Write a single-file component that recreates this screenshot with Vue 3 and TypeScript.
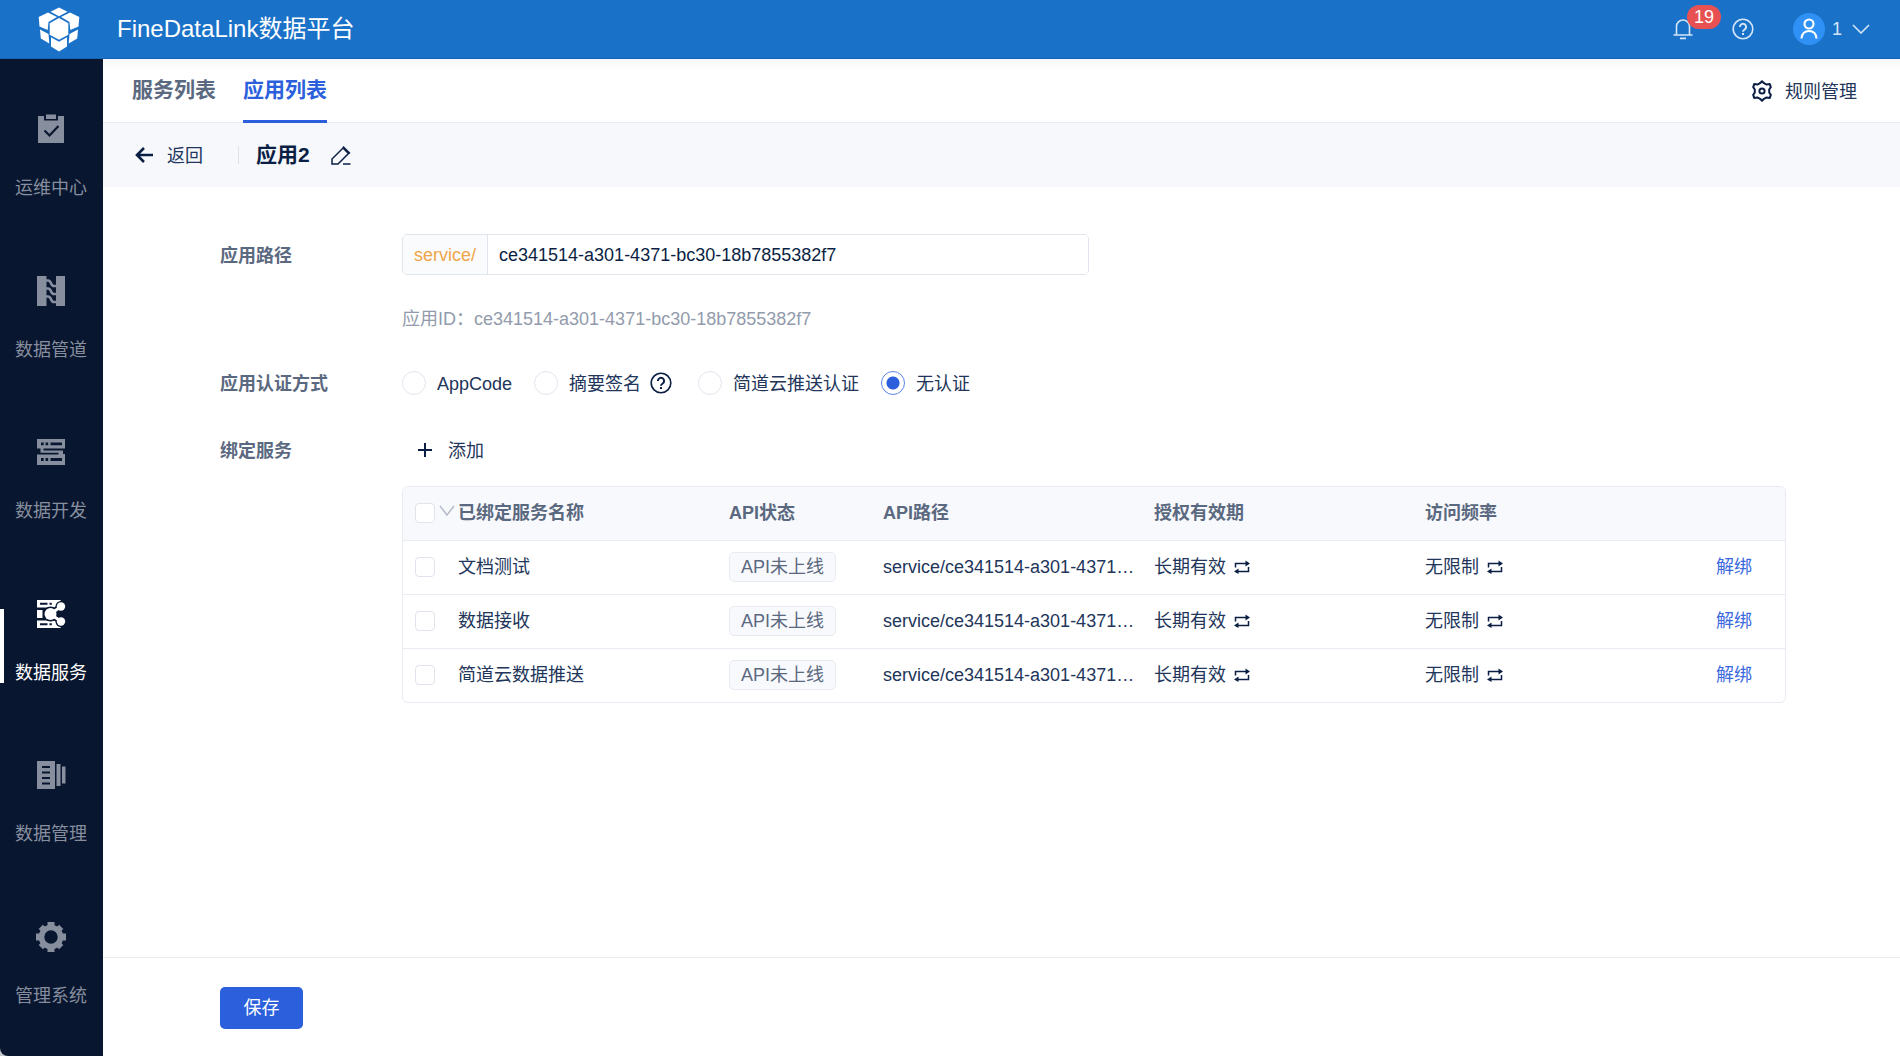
<script setup lang="ts">
import { ref, computed } from 'vue'

interface NavItem {
  key: string
  label: string
}

interface BoundService {
  id: number
  name: string
  status: string
  path: string
  validity: string
  rate: string
}

const navItems: NavItem[] = [
  { key: 'ops', label: '运维中心' },
  { key: 'pipeline', label: '数据管道' },
  { key: 'develop', label: '数据开发' },
  { key: 'service', label: '数据服务' },
  { key: 'manage', label: '数据管理' },
  { key: 'system', label: '管理系统' },
]
const activeNav = ref('service')

const appId = 'ce341514-a301-4371-bc30-18b7855382f7'
const appPath = ref(appId)

const authModes = [
  { value: 'appcode', label: 'AppCode', help: false },
  { value: 'digest', label: '摘要签名', help: true },
  { value: 'jiandaoyun', label: '简道云推送认证', help: false },
  { value: 'none', label: '无认证', help: false },
]
const authMode = ref('none')

const services = ref<BoundService[]>(
  ['文档测试', '数据接收', '简道云数据推送'].map((name, i) => ({
    id: i + 1,
    name,
    status: 'API未上线',
    path: `service/${appId}/${i + 1}`,
    validity: '长期有效',
    rate: '无限制',
  })),
)

const PATH_LIMIT = 26
function shorten(path: string): string {
  return path.length > PATH_LIMIT ? `${path.slice(0, PATH_LIMIT)}…` : path
}

const selected = ref<number[]>([])
const allSelected = computed({
  get: () => services.value.length > 0 && selected.value.length === services.value.length,
  set: (on: boolean) => {
    selected.value = on ? services.value.map((s) => s.id) : []
  },
})

function unbind(id: number) {
  services.value = services.value.filter((s) => s.id !== id)
  selected.value = selected.value.filter((s) => s !== id)
}
</script>

<template>
  <div class="app">
    <header class="topbar">
      <svg class="logo" viewBox="0 0 42 45" width="42" height="45" fill="#fff" aria-hidden="true">
        <path d="M21 .5l8.500 4.300L21 9.200l-8.500-4.400z" />
        <path d="M10 5.500L19 10l-8.500 5-.8 8L1.500 19.500.7 10z" />
        <path d="M32 5.500L23 10l8.500 5 .8 8 8.200-3.500.8-9.500z" />
        <path d="M21 11l9.300 5.300v11.500L21 32.700l-9.300-4.900V16.300z" />
        <path d="M2 22.500l8.500 4.500.8 9.500-8.500-5z" />
        <path d="M40 22.500L31.500 27l-.8 9.500 8.500-5z" />
        <path d="M13 30.200l8 4.500 8-4.500v9.300l-8 5-8-5z" />
      </svg>
      <h1 class="brand">FineDataLink数据平台</h1>
      <div class="top-tools">
        <button class="plain bell" aria-label="消息">
          <svg viewBox="0 0 20 22" width="20" height="22" fill="none" stroke="currentColor" stroke-width="1.600" aria-hidden="true">
            <path d="M3.500 17V8.500a6.500 6.500 0 0 1 13 0V17M.5 17h19M7 20.400h6" />
          </svg>
          <span class="badge">19</span>
        </button>
        <button class="plain help" aria-label="帮助">
          <svg viewBox="0 0 22 22" width="22" height="22" fill="none" stroke="currentColor" stroke-width="1.600" aria-hidden="true">
            <circle cx="11" cy="11" r="9.800" />
            <path d="M7.900 8.900a3.100 3.100 0 1 1 4.800 2.600c-1.100.7-1.700 1.100-1.700 2.200M11 15v2" stroke-width="2" />
          </svg>
        </button>
        <button class="plain user">
          <svg viewBox="0 0 32 32" width="32" height="32" fill="none" stroke="#fff" stroke-width="2.200" aria-hidden="true">
            <circle cx="16" cy="16" r="16" fill="#2f91f5" stroke="none" />
            <circle cx="16" cy="11" r="4.500" />
            <path d="M8.500 25.500c.4-4.700 3.200-7.500 7.500-7.500s7.100 2.800 7.500 7.500" />
          </svg>
          <span>1</span>
          <svg class="caret" viewBox="0 0 18 10" width="18" height="10" fill="none" stroke="currentColor" stroke-width="1.600" aria-hidden="true">
            <path d="M1 1l8 8 8-8" />
          </svg>
        </button>
      </div>
    </header>

    <div class="body">
      <nav class="sidebar">
        <a
          v-for="item in navItems"
          :key="item.key"
          href="#"
          class="nav-item"
          :class="{ active: item.key === activeNav }"
          @click.prevent="activeNav = item.key"
        >
          <svg v-if="item.key === 'ops'" viewBox="0 0 30 30" width="30" height="30" aria-hidden="true">
            <path fill="currentColor" d="M2 2h6v4.500h14V2h6v27H2zM10 .5h10V5H10z" />
            <path d="M8.500 16.500l5 5L22.500 12" fill="none" stroke="#081630" stroke-width="2.200" />
          </svg>
          <svg v-else-if="item.key === 'pipeline'" viewBox="0 0 30 30" width="30" height="30" aria-hidden="true">
            <path fill="currentColor" d="M1 0h9.500v30H1zM20 0h9v30h-9z" />
            <path d="M10 4.500h2c4 0 2 5.500 6 5.500h2M10 12.500h2c4 0 2 5.500 6 5.500h2M10 20.500h2c4 0 2 5.500 6 5.500h2" fill="none" stroke="currentColor" stroke-width="2.600" />
          </svg>
          <svg v-else-if="item.key === 'develop'" viewBox="0 0 30 30" width="30" height="30" aria-hidden="true">
            <path fill="currentColor" fill-rule="evenodd" d="M1 2h28v9.500H7.500v2H27V17h2v11H1V17.500h21.500v-1.800H4.500v-4.200H1zM5 5.500v2.700h2.700V5.500zm4.500 0v2.700h2.700V5.500zm5 0v2.700H26V5.500zM5 21v3h2.700v-3zm4.500 0v3h2.700v-3zm5 0v3H26v-3z" />
          </svg>
          <svg v-else-if="item.key === 'service'" viewBox="0 0 30 30" width="30" height="30" aria-hidden="true">
            <path fill="currentColor" fill-rule="evenodd" d="M1 1h24l-6 7.500H1zM4 3.700v2.100h7.500V3.700zm9.500 0v2.100h2.300V3.700zM1 11h5.500v8H1zM1 21.500h18l6 7.500H1zM4 24.200v2.100h7.500v-2.100zm9.500 0v2.100h2.300v-2.100z" />
            <path d="M14.500 15L25 7.500M14.500 15L25 22.500" stroke="#081630" stroke-width="6" />
            <circle cx="14.500" cy="15" r="7.500" fill="#081630" />
            <circle cx="25" cy="7.500" r="5.500" fill="#081630" />
            <circle cx="25" cy="22.500" r="5.500" fill="#081630" />
            <path d="M14.500 15L25 7.500M14.500 15L25 22.500" stroke="currentColor" stroke-width="3" />
            <g fill="currentColor">
              <circle cx="14.500" cy="15" r="6" />
              <circle cx="25" cy="7.500" r="4.200" />
              <circle cx="25" cy="22.500" r="4.200" />
            </g>
          </svg>
          <svg v-else-if="item.key === 'manage'" viewBox="0 0 30 30" width="30" height="30" aria-hidden="true">
            <path fill="currentColor" fill-rule="evenodd" d="M1 1h18v28H1zm5 5v2h8V6zm0 5.500v2h8v-2zm0 5.500v2h8v-2zm0 5.500v2h8v-2zM20.500 4h4v22h-4zM26 6.500h3.500v17H26z" />
          </svg>
          <svg v-else viewBox="0 0 30 30" width="30" height="30" aria-hidden="true">
            <g fill="none" stroke="currentColor">
              <circle cx="15" cy="15" r="9.500" stroke-width="5.600" />
              <path d="M15 0v5M15 25v5M0 15h5M25 15h5" stroke-width="7" />
              <path d="M4.800 4.800L8 8M22 22l3.200 3.200M4.800 25.200L8 22M22 8l3.200-3.200" stroke-width="6" />
            </g>
          </svg>
          <span>{{ item.label }}</span>
        </a>
      </nav>

      <main class="main">
        <div class="tabs">
          <a href="#" class="tab">服务列表</a>
          <a href="#" class="tab current">应用列表</a>
          <button class="plain rules">
            <svg viewBox="0 0 20 22" width="20" height="22" fill="none" stroke="currentColor" stroke-width="2" stroke-linejoin="round" aria-hidden="true">
              <path d="M8 3.200L10 1.200l2 2 2.600 1.400 3.200-.5 1 3-1.600 2.400v3l1.600 2.400-1 3-3.200-.5L12 18.800l-2 2-2-2-2.600-1.400-3.200.5-1-3 1.600-2.400v-3L1.200 7.100l1-3 3.200.5z" />
              <circle cx="10" cy="11" r="2.600" />
            </svg>
            <span class="caption">规则管理</span>
          </button>
        </div>

        <div class="crumb">
          <button class="plain back">
            <svg viewBox="0 0 20 18" width="20" height="18" fill="none" stroke="currentColor" stroke-width="2.600" aria-hidden="true">
              <path d="M19 9H3M10 2L3 9l7 7" />
            </svg>
            <span class="caption">返回</span>
          </button>
          <h2 class="app-name">应用2</h2>
          <button class="plain edit" aria-label="编辑名称">
            <svg viewBox="0 0 20 20" width="20" height="20" fill="none" stroke="currentColor" stroke-width="1.500" aria-hidden="true">
              <path d="M1 19v-5L12 3l5.500 5.500L7 19zM12 1.500l7 7M12 19h7.500" />
            </svg>
          </button>
        </div>

        <form id="app-form" class="form" @submit.prevent>
          <label class="form-label tall" for="app-path">应用路径</label>
          <div class="path-group">
            <span class="prefix">service/</span>
            <input id="app-path" v-model="appPath" type="text" />
          </div>

          <p class="app-id">应用ID：{{ appId }}</p>

          <span id="auth-label" class="form-label">应用认证方式</span>
          <div class="radios" role="radiogroup" aria-labelledby="auth-label">
            <div v-for="m in authModes" :key="m.value" class="radio-item">
              <label class="radio">
                <input v-model="authMode" type="radio" name="auth" :value="m.value" />
                <span class="caption">{{ m.label }}</span>
              </label>
              <svg v-if="m.help" class="hint" viewBox="0 0 22 22" width="22" height="22" fill="none" stroke="#0b1f44" stroke-width="1.600" aria-hidden="true">
                <circle cx="11" cy="11" r="9.800" />
                <path d="M7.900 8.900a3.100 3.100 0 1 1 4.800 2.600c-1.100.7-1.700 1.100-1.700 2.200M11 15v2" stroke-width="2" />
              </svg>
            </div>
          </div>

          <span class="form-label">绑定服务</span>
          <div class="binding">
            <button class="plain add" type="button">
              <svg viewBox="0 0 16 16" width="16" height="16" fill="none" stroke="currentColor" stroke-width="2" aria-hidden="true">
                <path d="M8 1v14M1 8h14" />
              </svg>
              <span class="caption">添加</span>
            </button>
            <div class="table-box">
              <table>
                <colgroup>
                  <col class="c-check" />
                  <col />
                  <col class="c-status" />
                  <col />
                  <col />
                  <col />
                  <col class="c-action" />
                </colgroup>
                <thead>
                  <tr>
                    <th class="check">
                      <div class="check-head">
                        <input v-model="allSelected" type="checkbox" aria-label="全选" />
                        <svg viewBox="0 0 16 14" width="16" height="14" fill="none" stroke="#b4bccb" stroke-width="1.500" aria-hidden="true">
                          <path d="M1 3l7 9 7-9" />
                        </svg>
                      </div>
                    </th>
                    <th>已绑定服务名称</th>
                    <th>API状态</th>
                    <th>API路径</th>
                    <th>授权有效期</th>
                    <th>访问频率</th>
                    <th></th>
                  </tr>
                </thead>
                <tbody>
                  <tr v-for="s in services" :key="s.id">
                    <td class="check">
                      <input v-model="selected" type="checkbox" :value="s.id" :aria-label="s.name" />
                    </td>
                    <td>{{ s.name }}</td>
                    <td><span class="tag">{{ s.status }}</span></td>
                    <td :title="s.path">{{ shorten(s.path) }}</td>
                    <td v-for="text in [s.validity, s.rate]" :key="text">
                      <div class="switchable">
                        <span>{{ text }}</span>
                        <button class="plain swap" type="button" aria-label="切换">
                          <svg viewBox="0 0 16 14" width="16" height="14" aria-hidden="true">
                            <path d="M1.500 7.500V3.500H13M14.500 7v4.500H3" fill="none" stroke="currentColor" stroke-width="1.500" />
                            <path d="M11.500.5L16 3.500l-4.500 3zM4.500 8.500L0 11.500l4.500 2.500z" fill="currentColor" />
                          </svg>
                        </button>
                      </div>
                    </td>
                    <td><a href="#" class="unbind" @click.prevent="unbind(s.id)">解绑</a></td>
                  </tr>
                </tbody>
              </table>
            </div>
          </div>
        </form>

        <footer class="footer">
          <button class="save" type="submit" form="app-form">保存</button>
        </footer>
      </main>
    </div>
  </div>
</template>

<style>
body {
  margin: 0;
  background: #c4c6ca;
}
</style>

<style scoped>
.app {
  min-height: 100vh;
  display: flex;
  flex-direction: column;
  font-family: "Liberation Sans", "Noto Sans CJK SC", sans-serif;
  font-size: 18px;
  line-height: 24px;
  color: #22355a;
}
.app *,
.app *::before {
  box-sizing: border-box;
}
h1,
h2,
p {
  margin: 0;
}
a {
  text-decoration: none;
}
input,
button {
  font: inherit;
}
svg {
  display: block;
  flex: none;
}
.plain {
  display: flex;
  align-items: center;
  padding: 0;
  border: 0;
  background: none;
  color: inherit;
  cursor: pointer;
}
.caption {
  padding-top: 2px;
}

/* top bar */
.topbar {
  display: flex;
  align-items: center;
  height: 59px;
  padding: 0 30px 0 38px;
  background: #1a72c8;
  border-bottom: 1px solid #1463b2;
  color: #fff;
}
.brand {
  margin-left: 37px;
  font-size: 24px;
  font-weight: 400;
}
.top-tools {
  display: flex;
  align-items: center;
  margin-left: auto;
  color: #d3e5f7;
}
.bell {
  position: relative;
}
.badge {
  position: absolute;
  left: 14px;
  top: -13px;
  width: 34px;
  border-radius: 12px;
  background: #e85151;
  color: #fff;
  font-size: 18px;
  text-align: center;
}
.help {
  margin-left: 39px;
}
.user {
  margin-left: 39px;
}
.user span {
  margin-left: 7px;
}
.caret {
  margin-left: 10px;
}

/* sidebar */
.body {
  flex: 1;
  display: flex;
}
.sidebar {
  flex: none;
  display: flex;
  flex-direction: column;
  width: 103px;
  padding-bottom: 28px;
  border-bottom-left-radius: 8px;
  background: #081630;
}
.nav-item {
  position: relative;
  flex: 1;
  display: flex;
  flex-direction: column;
  align-items: center;
  gap: 32px;
  padding: 55px 1px 0 0;
  color: #878e9d;
}
.nav-item.active {
  color: #fff;
}
.nav-item.active::before {
  content: "";
  position: absolute;
  left: 0;
  top: 65px;
  width: 4px;
  height: 74px;
  background: #fff;
}

/* main column */
.main {
  flex: 1;
  min-width: 0;
  display: flex;
  flex-direction: column;
  background: #fff;
}
.tabs {
  display: flex;
  gap: 27px;
  height: 64px;
  padding: 0 43px 0 29px;
  border-bottom: 1px solid #e9ebf1;
  background: linear-gradient(#f6f7fb, #fff 12px);
}
.tab {
  height: 64px;
  padding-top: 19px;
  border-bottom: 3px solid transparent;
  font-size: 21px;
  font-weight: 700;
  color: #5b6980;
}
.tab.current {
  border-color: #2b5fdc;
  color: #2b5fdc;
}
.rules {
  gap: 13px;
  margin-left: auto;
}
.rules svg {
  color: #0b1f44;
}
.crumb {
  display: flex;
  align-items: center;
  height: 64px;
  padding-left: 31px;
  background: #f7f8fc;
  color: #0b1f44;
}
.back {
  gap: 13px;
}
.back .caption {
  color: #22355a;
}
.app-name {
  margin-left: 35px;
  padding-left: 17px;
  border-left: 1px solid #dde1ea;
  font-size: 21px;
  line-height: 18px;
}
.edit {
  margin-left: 21px;
}

/* form */
.form {
  flex: 1;
  display: grid;
  grid-template-columns: 182px minmax(0, 1fr);
  align-content: start;
  padding: 47px 114px 40px 117px;
}
.form-label {
  padding-top: 2px;
  font-weight: 700;
  color: #5b6980;
}
.form-label.tall {
  line-height: 40px;
}
.path-group {
  display: flex;
  width: calc(50% - 5px);
  height: 41px;
  border: 1px solid #e0e4ec;
  border-radius: 5px;
  overflow: hidden;
}
.prefix {
  padding: 0 11px;
  border-right: 1px solid #e0e4ec;
  background: #fafbfc;
  color: #f0a648;
  line-height: 40px;
}
.path-group input {
  flex: 1;
  min-width: 0;
  padding: 0 11px;
  border: 0;
  outline: 0;
  background: #fff;
  color: #0b1f44;
}
.app-id {
  grid-column: 2;
  margin: 31px 0 39px;
  color: #929bac;
}
.radios {
  display: flex;
  gap: 22px;
  margin-bottom: 41px;
}
.radio-item {
  display: flex;
  align-items: center;
  gap: 9px;
}
.radio {
  display: flex;
  align-items: center;
  gap: 11px;
}
.hint {
  margin-right: 4px;
}
input[type="radio"] {
  appearance: none;
  flex: none;
  width: 24px;
  height: 24px;
  margin: 0;
  border: 1px solid #e3e5ee;
  border-radius: 50%;
  background: #fff;
}
input[type="radio"]:checked {
  border-color: #5a82e6;
  background: radial-gradient(circle, #2b5fdc 6px, #fff 7px);
}
.add {
  gap: 15px;
  margin: 0 0 23px 15px;
}
.add svg {
  color: #0b1f44;
}

/* bound services */
.table-box {
  border: 1px solid #e9ebf2;
  border-radius: 6px;
  overflow: hidden;
}
table {
  width: 100%;
  table-layout: fixed;
  border-collapse: collapse;
}
.c-check {
  width: 55px;
}
.c-status {
  width: 154px;
}
.c-action {
  width: 89px;
}
th,
td {
  height: 54px;
  padding: 0;
  border-bottom: 1px solid #e9ebf2;
  text-align: left;
  vertical-align: middle;
}
tr:last-child td {
  border-bottom: 0;
}
th {
  height: 53px;
  background: #f8f9fd;
  color: #5b6980;
}
.check {
  padding-left: 12px;
}
.check-head {
  display: flex;
  gap: 4px;
}
input[type="checkbox"] {
  appearance: none;
  display: block;
  flex: none;
  width: 20px;
  height: 20px;
  margin: 0;
  border: 1px solid #e0e3ec;
  border-radius: 4px;
  background: #fff;
}
input[type="checkbox"]:checked {
  border-color: #2b5fdc;
  background: #2b5fdc;
}
.tag {
  display: inline-block;
  padding: 2px 11px;
  border: 1px solid #e9ebf2;
  border-radius: 5px;
  background: #f8f9fd;
  color: #5b6980;
}
.switchable {
  display: flex;
  align-items: center;
  gap: 8px;
}
.swap {
  color: #0b1f44;
}
.unbind {
  padding-left: 20px;
  color: #3a6ade;
}

/* action bar */
.footer {
  padding: 29px 117px 27px;
  border-top: 1px solid #e9ebf1;
}
.save {
  display: block;
  width: 83px;
  height: 42px;
  padding: 0;
  border: 0;
  border-radius: 5px;
  background: #2b5fdc;
  color: #fff;
  cursor: pointer;
}
</style>
